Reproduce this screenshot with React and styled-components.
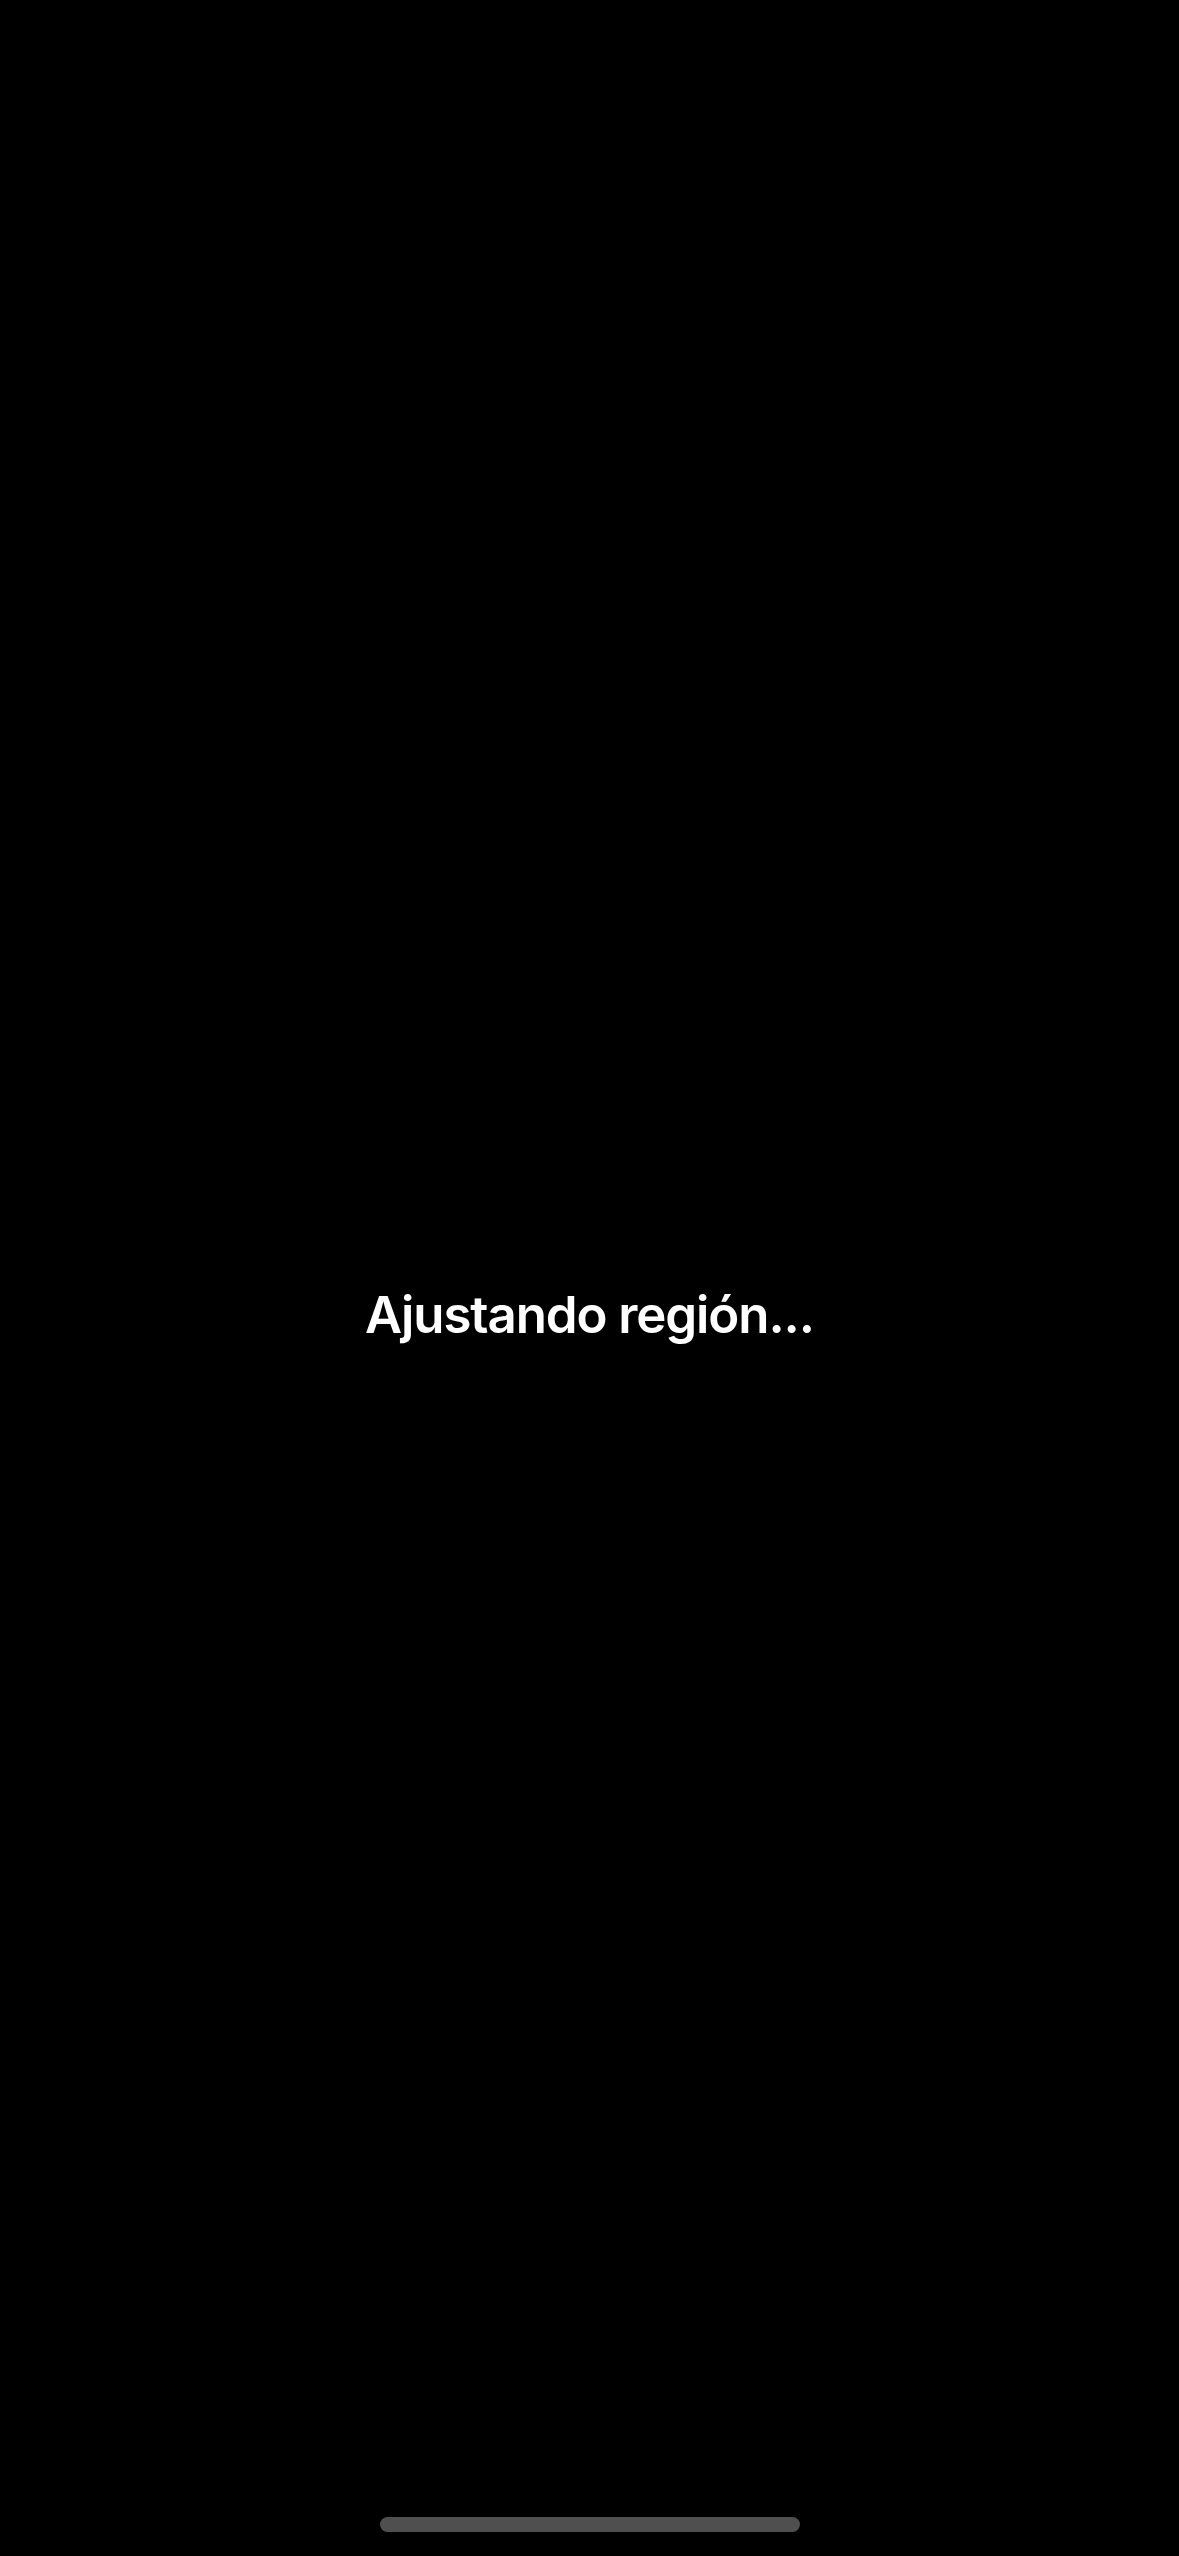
import React from 'react';
import styled, { createGlobalStyle } from 'styled-components';

const GlobalStyle = createGlobalStyle`
  html, body {
    margin: 0;
    padding: 0;
    background: #000;
  }
  body {
    font-family: Inter, "Liberation Sans", sans-serif;
  }
`;

const Screen = styled.div`
  width: 1179px;
  height: 2556px;
  background: #000;
  display: flex;
  flex-direction: column;
`;

const Content = styled.main`
  flex: 1;
  display: flex;
  align-items: center;
  justify-content: center;
  padding-top: 112px;
`;

const StatusText = styled.div`
  color: #fff;
  font-size: 51px;
  font-weight: 600;
  letter-spacing: -1.1px;
  line-height: 1;
`;

const Footer = styled.div`
  display: flex;
  justify-content: center;
  padding-bottom: 24px;
`;

const HomeIndicator = styled.div`
  width: 420px;
  height: 15px;
  border-radius: 8px;
  background: #4f4f4f;
`;

function App() {
  return (
    <>
      <GlobalStyle />
      <Screen>
        <Content>
          <StatusText>Ajustando región...</StatusText>
        </Content>
        <Footer>
          <HomeIndicator />
        </Footer>
      </Screen>
    </>
  );
}

export default App;
